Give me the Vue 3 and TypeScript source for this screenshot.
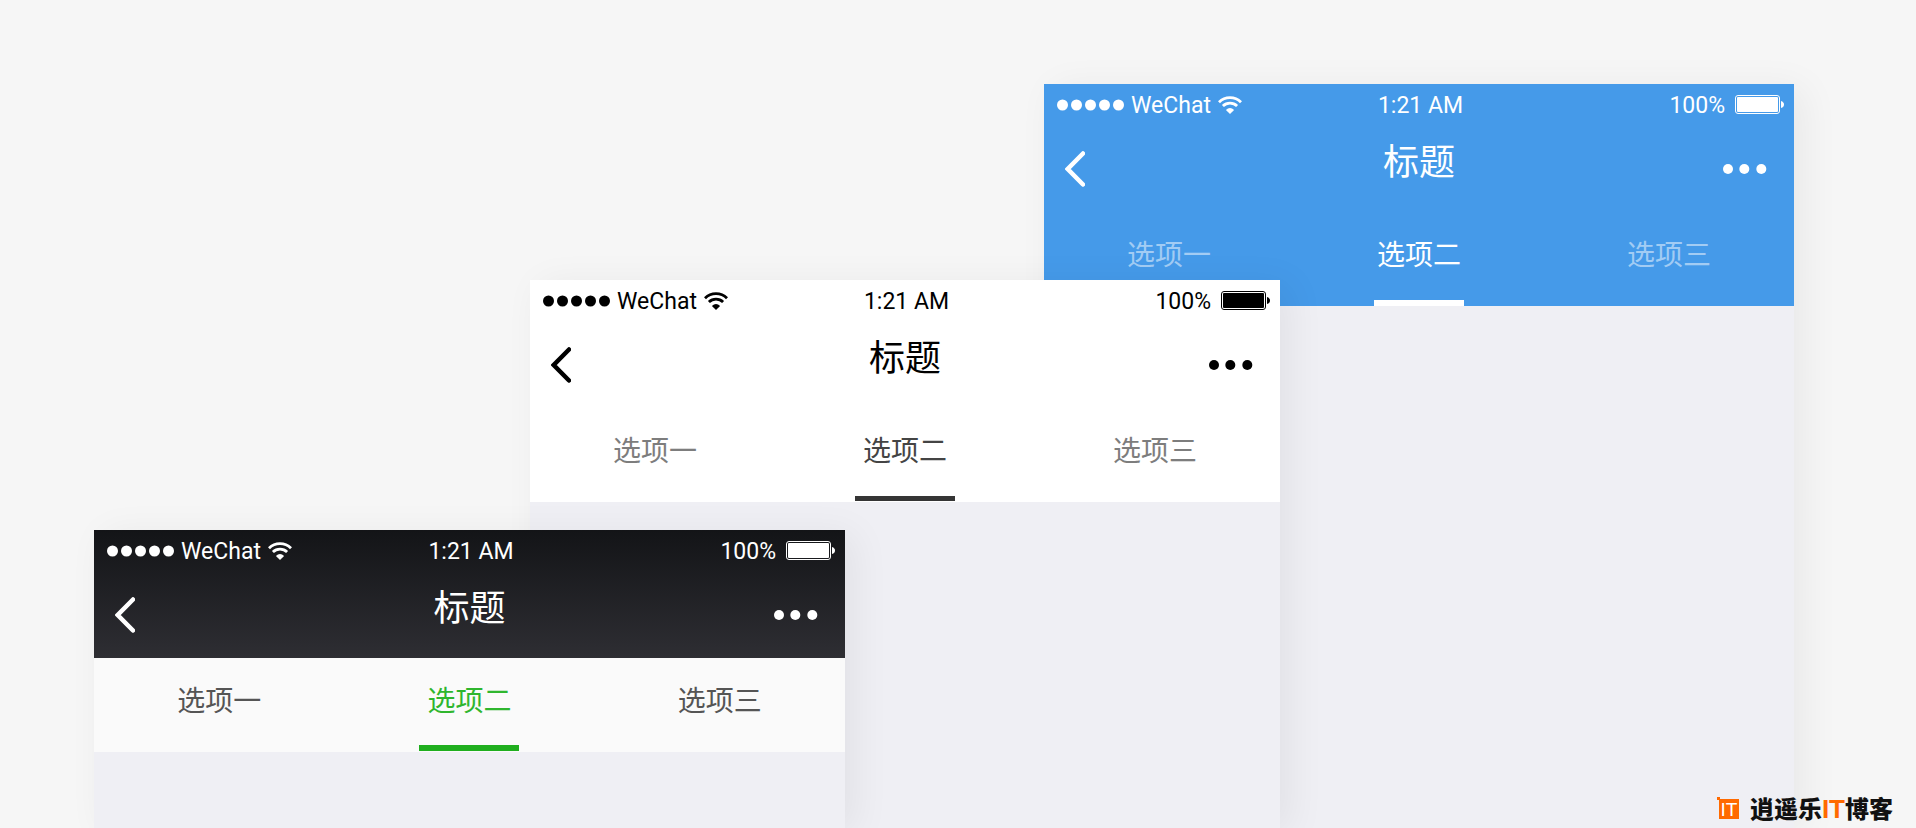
<script setup lang="ts">
import { reactive } from 'vue'

interface Screen {
  theme: string
  active: number
}

const options: string[] = ['选项一', '选项二', '选项三']

const screens = reactive<Screen[]>([
  { theme: 'blue', active: 1 },
  { theme: 'light', active: 1 },
  { theme: 'dark', active: 1 },
])
</script>

<template>
  <main class="stage">
    <section v-for="screen in screens" :key="screen.theme" class="phone" :class="screen.theme">
      <header class="top">
        <div class="status">
          <div class="carrier">
            <svg class="signal" viewBox="0 0 67 12" aria-hidden="true">
              <circle v-for="n in 5" :key="n" :cx="n * 14 - 8.5" cy="6" r="5.5" />
            </svg>
            <span>WeChat</span>
            <svg class="wifi" viewBox="0 0 24 18" aria-hidden="true">
              <path d="M1 6.2a15.6 15.6 0 0 1 22 0" />
              <path d="M4.9 10.1a10.1 10.1 0 0 1 14.2 0" />
              <path class="solid" d="M12 18L7.9 13.9Q12 10.3 16.1 13.9Z" />
            </svg>
          </div>
          <time class="clock">1:21 AM</time>
          <div class="power">
            <span>100%</span>
            <svg class="battery" viewBox="0 0 49 19" aria-hidden="true">
              <rect class="shell" x="0.5" y="0.5" width="44" height="18" rx="2.5" />
              <rect x="2" y="2" width="41" height="15" rx="1" />
              <path d="M46 6Q49 7 49 9.500Q49 12 46 13Z" />
            </svg>
          </div>
        </div>
        <nav class="bar">
          <button type="button" class="icon-button" aria-label="返回">
            <svg class="back" viewBox="0 0 20 36" aria-hidden="true">
              <path d="M18 2.500L2.700 18L18 33.500" />
            </svg>
          </button>
          <h1>标题</h1>
          <button type="button" class="icon-button more-button" aria-label="更多">
            <svg class="more" viewBox="0 0 44 10" aria-hidden="true">
              <circle cx="5" cy="5" r="5" />
              <circle cx="21.300" cy="5" r="5" />
              <circle cx="38.300" cy="5" r="5" />
            </svg>
          </button>
        </nav>
      </header>
      <div class="tabs" role="tablist">
        <button
          v-for="(option, index) in options"
          :key="option"
          type="button"
          role="tab"
          class="tab"
          :class="{ active: screen.active === index }"
          :aria-selected="screen.active === index"
          @click="screen.active = index"
        >
          {{ option }}
        </button>
      </div>
    </section>
    <a class="watermark" href="#">
      <span class="badge">IT</span>
      <span class="name">逍遥乐<span class="accent">IT</span>博客</span>
    </a>
  </main>
</template>

<style>
body {
  margin: 0;
  background: #f6f6f6;
}
</style>

<style scoped>
.stage {
  position: relative;
  display: grid;
  grid-template-columns:
    minmax(0, 94fr) minmax(0, 436fr) minmax(0, 315fr) minmax(0, 199fr)
    minmax(0, 236fr) minmax(0, 514fr) minmax(0, 122fr);
  grid-template-rows: 84px 196px 250px 1fr;
  min-height: 100vh;
  overflow: hidden;
  background: #f6f6f6;
  font-family: Roboto, "Noto Sans CJK SC", sans-serif;
}

.phone {
  background: #efeff4;
  box-shadow: 10px 4px 36px rgba(0, 0, 0, 0.06);
}

.blue {
  --fg: #fff;
  --tab: #a2ccf4;
  --tab-active: #fff;
  --line: #fff;
  grid-area: 2 / 5 / 5 / 7;
}

.light {
  --fg: #000;
  --tab: #7d7d7d;
  --tab-active: #444;
  --line: #353535;
  grid-area: 3 / 3 / 5 / 6;
}

.dark {
  --fg: #fff;
  --tab: #555;
  --tab-active: #2fb62e;
  --line: #1fae1e;
  grid-area: 4 / 2 / 5 / 4;
}

.top {
  color: var(--fg);
}

.blue .top,
.blue .tabs {
  background: #459ae9;
}

.light .top,
.light .tabs {
  background: #fff;
}

.dark .top {
  background: linear-gradient(#131417, #2e2e33);
}

.dark .tabs {
  background: #fafafa;
}

.status {
  display: grid;
  grid-template-columns: minmax(0, 1fr) auto minmax(0, 1fr);
  align-items: center;
  box-sizing: border-box;
  height: 41px;
  padding: 0 10px 0 13px;
  font-size: 23px;
  font-weight: 400;
  line-height: 24px;
}

.carrier,
.power {
  display: flex;
  align-items: center;
}

.carrier {
  gap: 7px;
}

.power {
  justify-content: flex-end;
  gap: 10px;
}

.status span,
.clock {
  padding-top: 2px;
}

svg {
  display: block;
  fill: currentColor;
}

.signal {
  width: 67px;
  height: 12px;
}

.wifi {
  width: 24px;
  height: 18px;
}

.wifi path {
  fill: none;
  stroke: currentColor;
  stroke-width: 2.800;
}

.wifi .solid {
  fill: currentColor;
  stroke: none;
}

.battery {
  width: 49px;
  height: 19px;
}

.battery .shell {
  fill: none;
  stroke: currentColor;
}

.bar {
  display: grid;
  grid-template-columns: minmax(0, 1fr) auto minmax(0, 1fr);
  align-items: center;
  height: 87px;
  padding: 0 21px;
}

.icon-button {
  justify-self: start;
  padding: 0;
  border: 0;
  background: none;
  color: inherit;
  cursor: pointer;
}

.more-button {
  justify-self: end;
  padding-right: 6px;
}

.back {
  width: 20px;
  height: 36px;
}

.back path {
  fill: none;
  stroke: currentColor;
  stroke-width: 4.500;
  stroke-linecap: round;
}

.more {
  width: 44px;
  height: 10px;
}

h1 {
  margin: 0;
  padding-bottom: 20px;
  font-family: "Noto Sans CJK SC", sans-serif;
  font-size: 36px;
  font-weight: 400;
  line-height: 40px;
}

.tabs {
  display: grid;
  grid-template-columns: repeat(3, 1fr);
}

.tab {
  display: flex;
  flex-direction: column;
  align-items: center;
  justify-content: space-between;
  box-sizing: border-box;
  height: 94px;
  padding: 21px 0 0;
  border: 0;
  background: none;
  color: var(--tab);
  font-family: "Noto Sans CJK SC", sans-serif;
  font-size: 28px;
  line-height: 40px;
  cursor: pointer;
}

.tab.active {
  color: var(--tab-active);
}

.tab.active::after {
  width: 100px;
  height: 6px;
  background: var(--line);
  content: "";
}

.blue .tab.active::after {
  width: 90px;
}

.light .tab.active,
.dark .tab.active {
  padding-bottom: 1px;
}

.light .tab.active::after {
  height: 5px;
}

.watermark {
  position: absolute;
  right: 23px;
  bottom: 9px;
  display: flex;
  align-items: center;
  gap: 11px;
  color: #111;
  text-decoration: none;
}

.badge {
  position: relative;
  width: 20px;
  height: 20px;
  background: #ff6a00;
  color: #fff;
  font-family: "Liberation Sans", sans-serif;
  font-size: 19px;
  line-height: 21px;
  text-align: center;
}

.badge::before {
  position: absolute;
  top: -2px;
  left: -2px;
  width: 3px;
  height: 3px;
  background: #ff6a00;
  content: "";
}

.name {
  font-family: "Noto Sans CJK SC", sans-serif;
  font-size: 24px;
  font-weight: 900;
  line-height: 20px;
}

.accent {
  color: #ff6a00;
  font-family: "Liberation Sans", sans-serif;
  font-size: 26px;
  font-weight: 700;
}
</style>
